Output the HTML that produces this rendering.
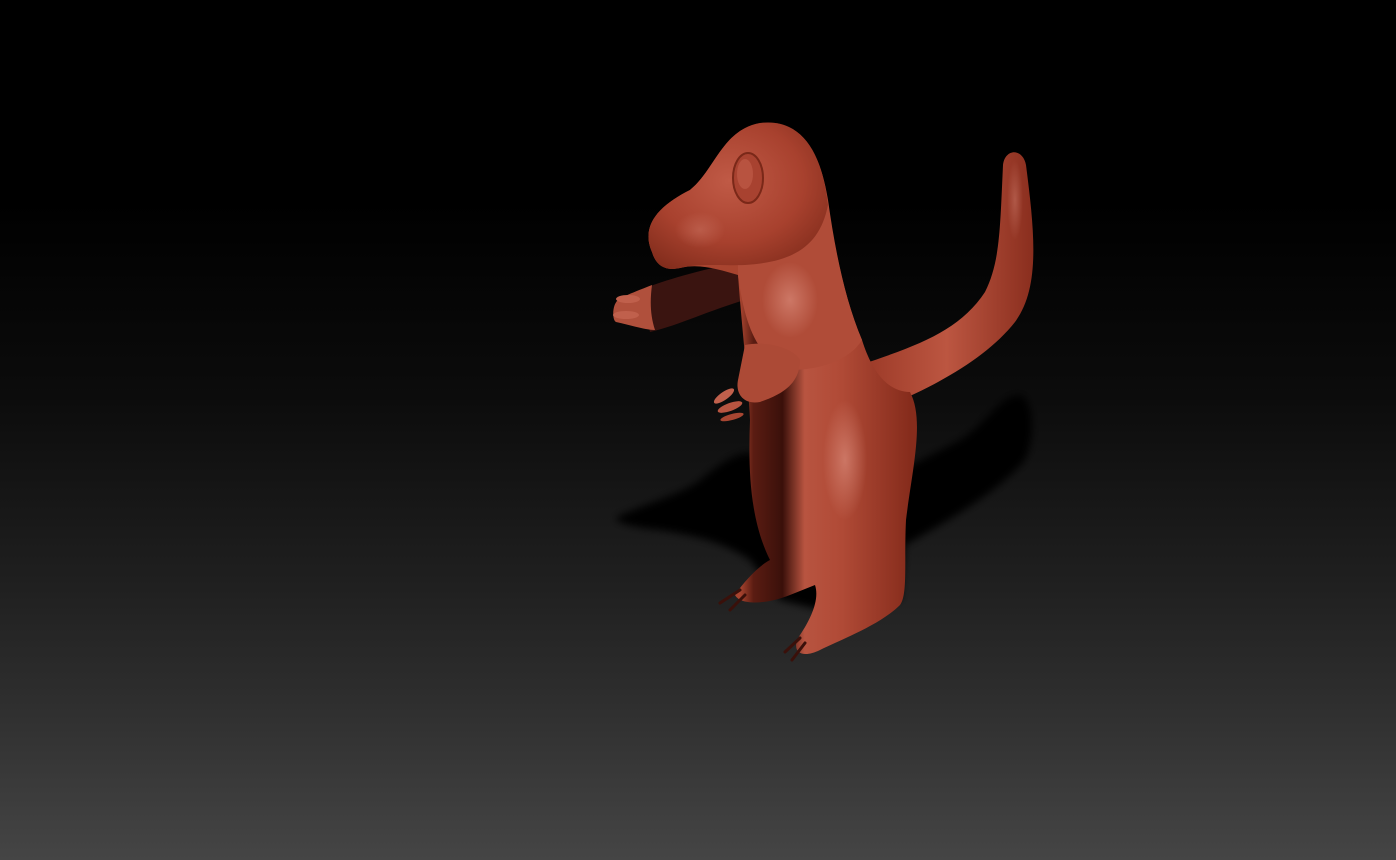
<!DOCTYPE html>
<html><head><style>
html,body{margin:0;padding:0;width:1396px;height:860px;overflow:hidden;}
body{background:linear-gradient(to bottom,#000 0px,#000 200px,#0c0c0c 400px,#1f1f1f 580px,#2e2e2e 700px,#454545 860px);}
svg{position:absolute;left:0;top:0;}
</style></head><body>
<svg width="1396" height="860" viewBox="0 0 1396 860">
<defs>
<filter id="blur" x="-20%" y="-20%" width="140%" height="140%"><feGaussianBlur stdDeviation="4"/></filter>
<radialGradient id="skin" cx="0.45" cy="0.4" r="0.75">
<stop offset="0" stop-color="#c05a46"/>
<stop offset="0.55" stop-color="#a8412e"/>
<stop offset="1" stop-color="#7a2818"/>
</radialGradient>
<linearGradient id="bodyg" gradientUnits="userSpaceOnUse" x1="740" y1="0" x2="910" y2="0">
<stop offset="0" stop-color="#a8442f"/>
<stop offset="0.08" stop-color="#5a1c12"/>
<stop offset="0.25" stop-color="#3a100a"/>
<stop offset="0.38" stop-color="#b85440"/>
<stop offset="0.6" stop-color="#b04a36"/>
<stop offset="1" stop-color="#862c1c"/>
</linearGradient>
<linearGradient id="tailg" x1="0" y1="0" x2="1" y2="0">
<stop offset="0" stop-color="#9a3826"/>
<stop offset="0.5" stop-color="#bc5641"/>
<stop offset="1" stop-color="#8a2e1e"/>
</linearGradient>
<radialGradient id="hl" cx="0.5" cy="0.5" r="0.5">
<stop offset="0" stop-color="#e09484" stop-opacity="0.6"/>
<stop offset="1" stop-color="#e09484" stop-opacity="0"/>
</radialGradient>
</defs>
<path d="M615,518 C640,505 680,495 700,480 C730,455 750,445 760,460 L800,510 C850,500 900,470 960,440 C990,420 1000,395 1020,395 C1035,400 1035,440 1025,460 C1000,490 950,520 905,545 L900,600 L820,610 L780,600 L750,560 C720,540 690,535 660,530 C640,528 620,525 615,518 Z" fill="#000" filter="url(#blur)"/>
<path d="M865,415 C930,390 985,360 1015,322 C1040,288 1035,235 1026,165 C1023,148 1005,148 1003,165 C1000,230 1000,262 985,292 C960,330 920,345 860,365 Z" fill="url(#tailg)"/>
<path d="M640,290 C665,280 700,270 740,262 L745,300 C710,310 680,325 650,332 Z" fill="#3a1410"/>
<path d="M652,285 C640,290 625,295 618,300 C612,305 612,320 616,322 C630,325 645,330 655,330 C650,315 650,300 652,285 Z" fill="#b0503c"/>
<ellipse cx="628" cy="299" rx="12" ry="4" fill="#c0604c"/>
<ellipse cx="626" cy="315" rx="13" ry="4" fill="#c0604c"/>
<path d="M652,252 C640,225 660,205 690,190 C715,170 722,130 760,123 C800,118 820,150 828,200 C835,250 845,300 862,340 C872,372 888,392 910,392 C925,420 912,470 906,520 C904,560 908,595 900,605 C880,625 840,640 820,650 C800,660 790,650 800,635 C810,620 820,600 815,585 L790,595 C765,605 740,605 735,595 C745,580 760,565 770,560 C750,520 748,470 750,420 C748,380 742,330 738,275 C720,270 700,263 680,268 C662,272 655,262 652,252 Z" fill="url(#bodyg)"/>
<path d="M738,265 C760,262 800,255 828,205 C835,250 845,300 862,340 C850,360 820,370 790,370 C760,360 745,330 738,275 Z" fill="#b04c38"/>
<path d="M652,252 C640,225 660,205 690,190 C715,170 722,130 760,123 C800,118 822,150 828,205 C820,245 795,262 745,265 C715,266 700,263 680,268 C662,272 655,262 652,252 Z" fill="url(#skin)"/>
<ellipse cx="748" cy="178" rx="15" ry="25" fill="#a84230" stroke="#7a2818" stroke-width="2"/>
<ellipse cx="745" cy="174" rx="8" ry="15" fill="#c76350" opacity="0.5"/>
<path d="M745,345 C770,340 795,350 800,360 C800,385 780,395 760,402 C745,405 735,395 738,380 Z" fill="#ac4a36"/>
<ellipse cx="724" cy="396" rx="12" ry="4" fill="#c0604c" transform="rotate(-35 724 396)"/>
<ellipse cx="730" cy="407" rx="13" ry="4" fill="#b85541" transform="rotate(-20 730 407)"/>
<ellipse cx="732" cy="417" rx="12" ry="3" fill="#a84632" transform="rotate(-15 732 417)"/>
<ellipse cx="790" cy="300" rx="28" ry="38" fill="url(#hl)"/>
<ellipse cx="845" cy="460" rx="22" ry="60" fill="url(#hl)"/>
<ellipse cx="700" cy="230" rx="25" ry="18" fill="url(#hl)" opacity="0.5"/>
<ellipse cx="1015" cy="200" rx="8" ry="40" fill="url(#hl)" opacity="0.6"/>
<path d="M740,590 L720,603 M745,595 L730,610 M800,638 L785,652 M805,643 L792,660" stroke="#3a100a" stroke-width="3" stroke-linecap="round"/>
</svg>
</body></html>
